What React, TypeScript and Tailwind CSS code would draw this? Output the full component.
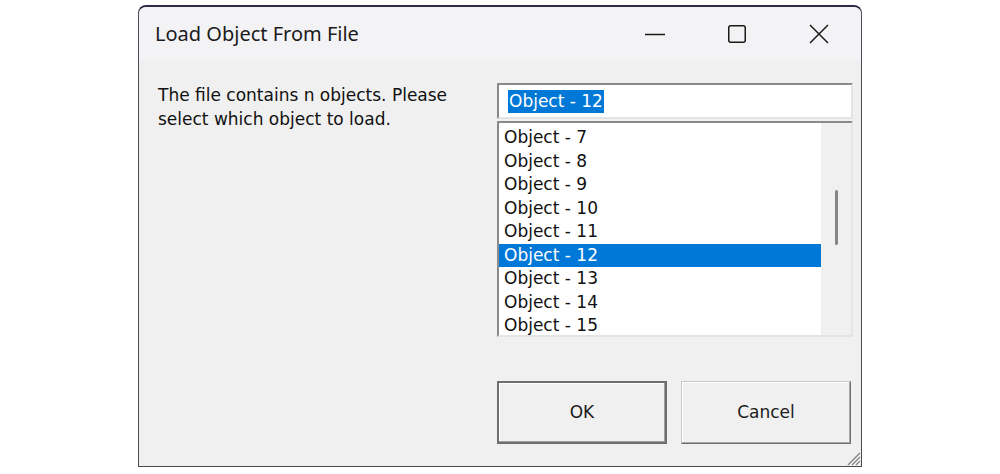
const items = [7, 8, 9, 10, 11, 12, 13, 14, 15];

const ui = { fontFamily: '"DejaVu Sans", Tahoma, sans-serif' };
const title = { fontFamily: '"Noto Sans", "Open Sans", sans-serif' };

export default function App() {
  return (
    <div className="h-[474px] w-[1000px] overflow-hidden bg-white pt-[5px]">
      <div className="ml-[138px] flex h-[462px] w-[724px] flex-col rounded-tl-[8px] rounded-tr-[8px] border border-t-2 border-[#4a4a55] border-t-[#2c2c44] bg-[#f0f0f0]">
        {/* title bar */}
        <div className="flex h-[53px] items-center rounded-t-[8px] bg-[#f3f3f5] pl-[16px]" style={title}>
          <span className="text-[20px] text-[#1b1b1b]">Load Object From File</span>
          <div className="ml-auto flex h-full items-center">
            <div className="flex w-[82px] justify-center">
              <svg width="20" height="20" viewBox="0 0 20 20">
                <line x1="0" y1="10.5" x2="20" y2="10.5" stroke="#1a1a1a" strokeWidth="1.5" />
              </svg>
            </div>
            <div className="flex w-[82px] justify-center">
              <svg width="20" height="20" viewBox="0 0 20 20">
                <rect x="1.75" y="1.75" width="16.5" height="16.5" rx="2" fill="none" stroke="#1a1a1a" strokeWidth="1.5" />
              </svg>
            </div>
            <div className="mr-[1px] flex w-[82px] justify-center">
              <svg width="20" height="20" viewBox="0 0 20 20">
                <path d="M1 1 L19 19 M19 1 L1 19" stroke="#1a1a1a" strokeWidth="1.5" />
              </svg>
            </div>
          </div>
        </div>

        {/* body */}
        <div className="relative flex flex-1 pt-[23px]" style={ui}>
          <p className="ml-[19px] w-[310px] text-[17px] leading-[24px] text-[#111]">
            The file contains n objects. Please select which object to load.
          </p>

          <div className="ml-auto mr-[8px] flex w-[356px] flex-col">
            <div className="flex h-[36px] items-center border-2 border-[#8a8a8a] border-b-[#e4e4e4] border-r-[#e4e4e4] bg-white pl-[9px]">
              <span className="bg-[#0078d7] px-[1px] text-[17px] leading-[23px] text-white">Object - 12</span>
            </div>

            <div className="mt-[2px] flex h-[216px] border-2 border-[#8a8a8a] border-b-[#e4e4e4] border-r-[#e4e4e4] bg-white">
              <div className="flex-1 pt-[3px]">
                {items.map((n) => (
                  <div
                    key={n}
                    className={
                      n === 12
                        ? "h-[23.5px] bg-[#0078d7] pl-[5px] text-[17px] leading-[23.5px] text-white"
                        : "h-[23.5px] pl-[5px] text-[17px] leading-[23.5px] text-[#111]"
                    }
                  >
                    Object - {n}
                  </div>
                ))}
              </div>
              <div className="flex w-[30px] justify-center bg-[#f0f0f0] pt-[67px]">
                <div className="h-[55px] w-[3px] rounded-full bg-[#858585]" />
              </div>
            </div>

            <div className="mt-[44px] flex gap-[14px]">
              <button className="h-[63px] w-[170px] border-2 border-[#6e6e6e] bg-[#f0f0f0] text-[17px] text-[#1b1b1b] shadow-[inset_-1px_-1px_0_#a0a0a0,inset_1px_1px_0_#ffffff]">
                OK
              </button>
              <button className="h-[63px] w-[170px] border border-[#c8c8c8] border-b-[#6f6f6f] border-r-[#6f6f6f] bg-[#f0f0f0] text-[17px] text-[#1b1b1b] shadow-[inset_-1px_-1px_0_#a8a8a8,inset_1px_1px_0_#ffffff]">
                Cancel
              </button>
            </div>
          </div>

          {/* size grip */}
          <svg className="absolute bottom-0 right-0" width="16" height="16" viewBox="0 0 16 16">
            <path d="M15 3 L3 15 M15 7 L7 15 M15 11 L11 15" stroke="#8a8a8a" strokeWidth="1.5" />
            <path d="M16 4 L4 16 M16 8 L8 16 M16 12 L12 16" stroke="#ffffff" strokeWidth="1" />
          </svg>
        </div>
      </div>
    </div>
  );
}
